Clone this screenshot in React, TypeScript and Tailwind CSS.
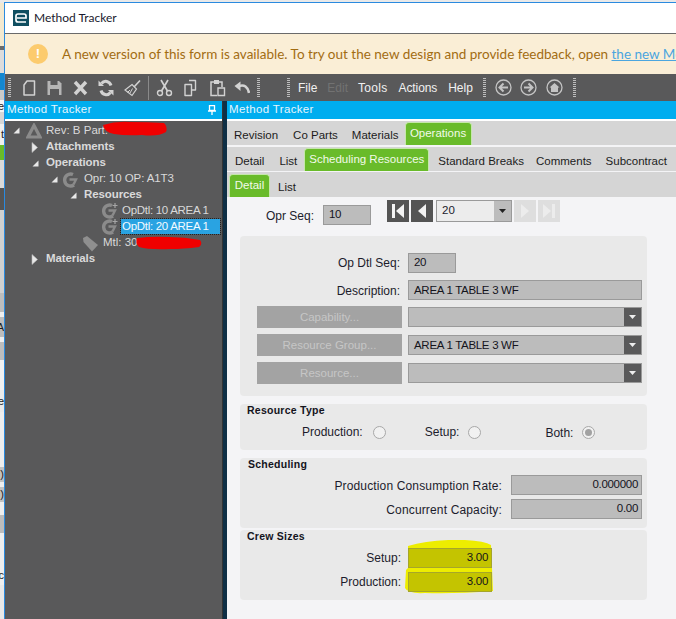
import React from "react";

const C = "#d2d2d2";

function Grip({ className = "" }: { className?: string }) {
  return <div className={"w-[3px] h-[20px] bg-[repeating-linear-gradient(to_bottom,#bdbdbd_0px,#bdbdbd_1px,#59595a_1px,#59595a_2px)] " + className} />;
}

function Icon({ w, children, className = "" }: { w: number; children: React.ReactNode; className?: string }) {
  return (
    <svg width={w} height={18} viewBox={`0 0 ${w} 18`} fill="none" stroke={C} strokeWidth={2} className={className}>
      {children}
    </svg>
  );
}

function Arrow({ open }: { open: boolean }) {
  return open ? (
    <svg width="7" height="7" viewBox="0 0 7 7" className="shrink-0"><path d="M6.5 .5V6.5H.5Z" fill="#e8e8e8" /></svg>
  ) : (
    <svg width="7" height="11" viewBox="0 0 7 11" className="shrink-0"><path d="M1 .5 6.5 5.5 1 10.5Z" fill="#e8e8e8" stroke="#bbb" strokeWidth=".6" /></svg>
  );
}

function GIcon({ plus }: { plus?: boolean }) {
  return (
    <svg width="18" height="17" viewBox="0 0 18 17" fill="none" className="shrink-0">
      <path d="M11 3.5A6 6 0 1 0 12 14" stroke="#8b8b8b" strokeWidth="3.4" />
      <path d="M7.5 8.5h6.5l-2.5 5" stroke="#8b8b8b" strokeWidth="2.4" />
      {plus ? <path d="M14 1v5M11.5 3.5h5" stroke="#a5a5a5" strokeWidth="1.2" /> : null}
    </svg>
  );
}

function Tab({ children, active, className = "" }: { children: React.ReactNode; active?: boolean; className?: string }) {
  if (active) {
    return (
      <div className={"self-end flex items-start justify-center bg-[#69bb2a] border border-b-0 border-[#c5e7ab] rounded-t-[4px] text-[#f2fae9] pt-[2px] " + className}>
        {children}
      </div>
    );
  }
  return <div className={"text-[#1c1c1c] pt-[6px] " + className}>{children}</div>;
}

function Field({ children, className = "" }: { children?: React.ReactNode; className?: string }) {
  return (
    <div className={"h-[20px] bg-[#bcbcbc] border border-[#9a9a9a] flex items-center text-[#14141c] text-[11.5px] tracking-[-0.3px] shrink-0 " + className}>
      {children}
    </div>
  );
}

function Combo({ text }: { text?: string }) {
  return (
    <div className="w-[234px] h-[20px] bg-[#bcbcbc] border border-[#9a9a9a] flex items-center text-[#14141c] text-[11.5px] tracking-[-0.3px] pl-[5px]">
      <span className="flex-1 pt-[1px]">{text}</span>
      <div className="w-[17px] h-[18px] bg-[#59595a] flex items-center justify-center">
        <svg width="7" height="4" viewBox="0 0 7 4"><path d="M0 0H7L3.5 4Z" fill="#eee" /></svg>
      </div>
    </div>
  );
}

function GrayBtn({ children }: { children: React.ReactNode }) {
  return (
    <div className="w-[145px] h-[22px] bg-[#a3a3a3] text-[#c6c6c6] flex items-center justify-center mr-[6px] pt-[1px] text-[11.5px]">
      {children}
    </div>
  );
}

function Radio({ on }: { on?: boolean }) {
  return (
    <div className="w-[13px] h-[13px] rounded-full border border-[#a8a8a8] bg-[#f1f1f1] flex items-center justify-center shrink-0">
      {on ? <div className="w-[7px] h-[7px] rounded-full bg-[#a2a2a2]" /> : null}
    </div>
  );
}

function NavBtn({ kind, off }: { kind: "first" | "prev" | "next" | "last"; off?: boolean }) {
  const fill = off ? "#ececec" : "#f2f2f2";
  return (
    <div className={"w-[22px] h-[22px] flex items-center justify-center shrink-0 " + (off ? "bg-[#dedede]" : "bg-[#545454]")}>
      <svg width="14" height="16" viewBox="0 0 14 16">
        {kind === "first" && <><rect x="1" y="1" width="3" height="14" fill={fill} /><path d="M13 1V15L5 8Z" fill={fill} /></>}
        {kind === "prev" && <path d="M11 1V15L3 8Z" fill={fill} />}
        {kind === "next" && <path d="M3 1V15L11 8Z" fill={fill} />}
        {kind === "last" && <><rect x="10" y="1" width="3" height="14" fill={fill} /><path d="M1 1V15L9 8Z" fill={fill} /></>}
      </svg>
    </div>
  );
}

function Circle({ children, className = "" }: { children: React.ReactNode; className?: string }) {
  return (
    <svg width="17" height="17" viewBox="0 0 17 17" fill="none" className={className}>
      <circle cx="8.5" cy="8.5" r="7.5" stroke="#c4c4c4" strokeWidth="1.3" />
      {children}
    </svg>
  );
}

const stripe = [
  ["h-[3px]", "bg-[#e9e9e9]", ""],
  ["h-[43px]", "bg-[#f3e9d0]", ""],
  ["h-[4px]", "bg-[#6b6b6b]", ""],
  ["h-[23px]", "bg-[#dcdcdc]", ""],
  ["h-[17px]", "bg-[#1388d0]", ""],
  ["h-[10px]", "bg-[#c9c9c9]", ""],
  ["h-[12px]", "bg-[#f4f4f4]", "e"],
  ["h-[12px]", "bg-[#d6d6d6]", ""],
  ["h-[21px]", "bg-[#efefef]", "t"],
  ["h-[15px]", "bg-[#69bb2a]", ""],
  ["h-[28px]", "bg-[#dadada]", ""],
  ["h-[22px]", "bg-[#555555]", ""],
  ["h-[83px]", "bg-[#d0d0d0]", ""],
  ["h-[19px]", "bg-[#bdbdbd]", ""],
  ["h-[5px]", "bg-[#eeeeee]", ""],
  ["h-[20px]", "bg-[#bdbdbd]", "A"],
  ["h-[5px]", "bg-[#eeeeee]", ""],
  ["h-[18px]", "bg-[#bdbdbd]", ""],
  ["h-[30px]", "bg-[#f2f2f2]", ""],
  ["h-[22px]", "bg-[#eaeaea]", "e"],
  ["h-[55px]", "bg-[#eeeeee]", ""],
  ["h-[15px]", "bg-[#c2c2c2]", ")"],
  ["h-[5px]", "bg-[#eeeeee]", ""],
  ["h-[15px]", "bg-[#c2c2c2]", ")"],
  ["h-[13px]", "bg-[#eeeeee]", ""],
  ["h-[18px]", "bg-[#bcbcbc]", ""],
  ["h-[32px]", "bg-[#eeeeee]", ""],
  ["h-[20px]", "bg-[#eeeeee]", "c"],
  ["h-[34px]", "bg-[#e8e8e8]", ""],
];

export default function App() {
  return (
    <div className="relative w-[676px] h-[619px] overflow-hidden flex bg-[#e9e9e9] font-['Liberation_Sans',Arial,sans-serif] text-[12px]">
      <div className="w-[4px] shrink-0 flex flex-col overflow-hidden">
        {stripe.map(([h, bg, t], i) => (
          <div key={i} className={"shrink-0 flex items-center justify-end text-[11px] text-[#222] leading-none overflow-hidden " + h + " " + bg}>
            {t}
          </div>
        ))}
      </div>

      <div className="flex-1 min-w-0 flex flex-col mt-[2px] border-l border-t border-[#2a8adf]">
        <div className="h-[31px] shrink-0 bg-white border-b border-[#6a6a6a] flex items-center pl-[8px]">
          <div className="w-[16px] h-[16px] bg-[#0f4e60] flex items-center justify-center mr-[5px]">
            <svg width="12" height="10" viewBox="0 0 12 10" fill="none"><path d="M11 9H3Q1 9 1 7V3Q1 1 3 1H9Q11 1 11 3V5H2" stroke="#fff" strokeWidth="1.7" /></svg>
          </div>
          <span className="font-['Lato',sans-serif] text-[12px] text-[#1a1a2e]">Method Tracker</span>
        </div>

        <div className="h-[40px] shrink-0 bg-[#faeed6] flex items-center pl-[23px] whitespace-nowrap overflow-hidden">
          <div className="w-[20px] h-[20px] rounded-full bg-[#fccb6e] flex items-center justify-center text-white font-bold text-[13px] mr-[14px] shrink-0">!</div>
          <span className="font-['Lato',sans-serif] text-[13.5px] text-[#a26c12]">
            A new version of this form is available. To try out the new design and provide feedback, open{" "}
            <span className="underline text-[#4aa5df]">the new Method Tracker</span>
          </span>
        </div>

        <div className="h-[27px] shrink-0 bg-[#59595a] flex items-center text-[#f1f1f1] text-[12px] whitespace-nowrap">
          <Grip className="ml-[3px]" />
          <Icon w={14} className="ml-[11px]"><path d="M5 2H12.5V16H2V6Z" strokeWidth="1.5" strokeLinejoin="round" /></Icon>
          <Icon w={17} className="ml-[10px]"><path d="M1.5 2H13L15.5 4.5V16H1.5Z" fill="#b5b5b5" stroke="none" /><rect x="4.5" y="2" width="7" height="4" fill="#59595a" stroke="none" /><rect x="4" y="10" width="9" height="6" fill="#59595a" stroke="none" /></Icon>
          <Icon w={15} className="ml-[10px]"><path d="M2 3 13 15M13 3 2 15" strokeWidth="3.4" /></Icon>
          <Icon w={16} className="ml-[10px]"><path d="M13 6.5A5.5 6 0 0 0 3.5 4.5M3 11.5A5.5 6 0 0 0 12.5 13.5" strokeWidth="3" /><path d="M6 7H0.5V1.5ZM10 11h5.5v5.5Z" fill={C} stroke="none" /></Icon>
          <Icon w={17} className="ml-[10px]"><path d="M16 1.5 10 8" strokeWidth="1.6" /><path d="M8 5.5 12.5 10 8 16.5 1 11 Z" strokeWidth="1.2" /><path d="M6 11 3.5 13.5M8.5 9.5 6 14" strokeWidth="1" /></Icon>
          <div className="w-px h-[24px] bg-[#8a8a8a] ml-[7px]" />
          <Icon w={17} className="ml-[7px]"><circle cx="4" cy="14" r="2.5" strokeWidth="1.4" /><circle cx="13" cy="14" r="2.5" strokeWidth="1.4" /><path d="M5.5 12 12 1M11.5 12 5 1" strokeWidth="1.7" /></Icon>
          <Icon w={15} className="ml-[10px]"><path d="M6 1.5H12.5V11H9M2 5.5H8.5V16.5H2Z" strokeWidth="1.4" strokeLinejoin="round" /></Icon>
          <Icon w={17} className="ml-[11px]"><path d="M5 3H2V16.5H8M10 3H13V8" strokeWidth="1.5" /><rect x="5" y="1" width="5" height="4" fill={C} stroke="none" /><path d="M9 9H15.5V16.5H9Z" strokeWidth="1.4" /></Icon>
          <Icon w={16} className="ml-[8px]"><path d="M5 7Q13 4.5 15 14" strokeWidth="2.6" /><path d="M6.5 2.5V12L0.5 7Z" fill={C} stroke="none" /></Icon>
          <Grip className="ml-[7px]" />
          <Grip className="ml-[27px]" />
          <span className="ml-[8px]">File</span>
          <span className="ml-[10px] text-[#727272]">Edit</span>
          <span className="ml-[10px] tracking-[0.3px]">Tools</span>
          <span className="ml-[11px] tracking-[-0.1px]">Actions</span>
          <span className="ml-[11px]">Help</span>
          <Grip className="ml-[10px]" />
          <Circle className="ml-[9px]"><path d="M13 8.5H5M8.5 4.5 4.5 8.5 8.5 12.5" stroke="#c4c4c4" strokeWidth="2" /></Circle>
          <Circle className="ml-[8px]"><path d="M4 8.5H12M8.5 4.5 12.5 8.5 8.5 12.5" stroke="#c4c4c4" strokeWidth="2" /></Circle>
          <Circle className="ml-[9px]"><path d="M3.5 8.5 8.5 4 13.5 8.5H12V13H5V8.5Z" fill="#c4c4c4" /></Circle>
          <Grip className="ml-[10px]" />
        </div>

        <div className="flex-1 min-h-0 flex">
          <div className="w-[217px] shrink-0 bg-[#59595a] flex flex-col text-[#dadada] text-[11.5px] whitespace-nowrap">
            <div className="h-[18px] bg-[#00adef] text-[#e6f6fd] flex items-center justify-between pl-[2px] pr-[6px] tracking-[0.35px]">
              <span>Method Tracker</span>
              <svg width="8" height="10" viewBox="0 0 8 10"><path d="M1.5 0.5H6.5V5.5H1.5ZM0 6H8M4 6V10" stroke="#fff" strokeWidth="1.3" fill="none" /></svg>
            </div>
            <div className="h-[2px] bg-white" />
            <div className="flex items-center h-[17px] pl-[8px] mt-[1px]">
              <Arrow open />
              <svg width="16" height="16" viewBox="0 0 16 16" className="ml-[6px] mr-[4px]" fill="none"><path d="M8 2.5 14 14H2Z" stroke="#8b8b8b" strokeWidth="3.2" /></svg>
              <span>Rev: B Part.</span>
            </div>
            <div className="flex items-center h-[16px] pl-[26px]"><Arrow open={false} /><span className="ml-[8px] font-bold tracking-[-0.1px]">Attachments</span></div>
            <div className="flex items-center h-[16px] pl-[27px]"><Arrow open /><span className="ml-[7px] font-bold tracking-[-0.1px]">Operations</span></div>
            <div className="flex items-center h-[16px] pl-[46px]"><Arrow open /><span className="ml-[4px]"><GIcon /></span><span className="ml-[4px] tracking-[-0.1px]">Opr: 10 OP: A1T3</span></div>
            <div className="flex items-center h-[16px] pl-[65px]"><Arrow open /><span className="ml-[7px] font-bold tracking-[-0.1px]">Resources</span></div>
            <div className="flex items-center h-[15px] pl-[96px]"><GIcon plus /><span className="ml-[3px] tracking-[-0.3px]">OpDtl: 10 AREA 1</span></div>
            <div className="flex items-center h-[17px] pl-[96px]"><GIcon plus /><span className="ml-[2px] pl-[1px] w-[99px] bg-[#29a3e2] text-[#f2faff] h-[15px] leading-[15px] tracking-[-0.3px] outline-1 outline-dotted outline-[#222]">OpDtl: 20 AREA 1</span></div>
            <div className="flex items-center h-[16px] pl-[77px]">
              <svg width="17" height="17" viewBox="0 0 17 17" className="mr-[4px]"><path d="M1 3 5 1 16 10 10 16.5 1.5 7Z" fill="#8f8f8f" /></svg>
              <span>Mtl: 30</span>
            </div>
            <div className="flex items-center h-[16px] pl-[26px]"><Arrow open={false} /><span className="ml-[8px] font-bold tracking-[-0.1px]">Materials</span></div>
          </div>

          <div className="w-[5px] shrink-0 bg-[#0f2f45] border-l border-[#333]" />

          <div className="flex-1 min-w-0 bg-[#f4f4f6] flex flex-col whitespace-nowrap text-[11.5px]">
            <div className="h-[18px] bg-[#00adef] text-[#e6f6fd] flex items-center pl-[2px] tracking-[0.35px]">Method Tracker</div>
            <div className="h-[2px] bg-white" />
            <div className="h-[24px] bg-[#d5d5d5] flex items-center">
              <Tab className="ml-[7px]">Revision</Tab>
              <Tab className="ml-[15px]">Co Parts</Tab>
              <Tab className="ml-[14px]">Materials</Tab>
              <Tab active className="ml-[6px] w-[67px] h-[23px]">Operations</Tab>
            </div>
            <div className="h-[2px] bg-[#f4f4f6]" />
            <div className="h-[24px] bg-[#d5d5d5] flex items-center">
              <Tab className="ml-[8px]">Detail</Tab>
              <Tab className="ml-[15px]">List</Tab>
              <Tab active className="ml-[7px] w-[125px] h-[23px]">Scheduling Resources</Tab>
              <Tab className="ml-[9px]">Standard Breaks</Tab>
              <Tab className="ml-[12px]">Comments</Tab>
              <Tab className="ml-[14px]">Subcontract</Tab>
            </div>
            <div className="h-[1px] bg-[#f4f4f6]" />
            <div className="h-[25px] bg-[#d5d5d5] flex items-center">
              <Tab active className="ml-[2px] w-[41px] h-[23px]">Detail</Tab>
              <Tab className="ml-[8px]">List</Tab>
            </div>

            <div className="flex items-start h-[39px] pt-[3px] text-[#1c1c2c]">
              <div className="w-[87px] text-right pt-[7px] text-[12px]">Opr Seq:</div>
              <Field className="w-[48px] pl-[5px] ml-[9px] mt-[5px]">10</Field>
              <div className="ml-[16px] flex gap-[2px]"><NavBtn kind="first" /><NavBtn kind="prev" /></div>
              <div className="ml-[3px] w-[76px] h-[22px] bg-[#ececec] border border-[#9a9a9a] flex items-center pl-[5px]">
                <span className="flex-1">20</span>
                <div className="w-[17px] h-[20px] bg-[#bcbcbc] flex items-center justify-center"><svg width="7" height="4" viewBox="0 0 7 4"><path d="M0 0H7L3.5 4Z" fill="#222" /></svg></div>
              </div>
              <div className="ml-[2px] flex gap-[2px]"><NavBtn kind="next" off /><NavBtn kind="last" off /></div>
            </div>

            <div className="ml-[13px] w-[407px] flex flex-col text-[#1c1c2c] text-[12px]">
              <div className="h-[160px] bg-[#e9e9e9] rounded-[4px] pt-[17px] pl-[17px] flex flex-col">
                <div className="flex items-center"><div className="w-[143px] text-right mr-[8px]">Op Dtl Seq:</div><Field className="w-[48px] pl-[5px]">20</Field></div>
                <div className="flex items-center mt-[7px]"><div className="w-[143px] text-right mr-[8px] pt-[2px]">Description:</div><Field className="w-[234px] pl-[5px] pt-[1px]">AREA 1 TABLE 3 WF</Field></div>
                <div className="flex items-center mt-[6px]"><GrayBtn>Capability...</GrayBtn><Combo /></div>
                <div className="flex items-center mt-[6px]"><GrayBtn>Resource Group...</GrayBtn><Combo text="AREA 1 TABLE 3 WF" /></div>
                <div className="flex items-center mt-[6px]"><GrayBtn>Resource...</GrayBtn><Combo /></div>
              </div>

              <div className="mt-[8px] h-[46px] bg-[#e9e9e9] rounded-[4px] pl-[7px]">
                <div className="font-bold text-[10.5px] tracking-[0.25px] text-[#14141c] leading-[12px]">Resource Type</div>
                <div className="flex items-center mt-[9px] h-[14px]">
                  <span className="ml-[55px]">Production:</span><span className="ml-[10px]"><Radio /></span>
                  <span className="ml-[39px] -mt-[1px]">Setup:</span><span className="ml-[9px]"><Radio /></span>
                  <span className="ml-[64px] mt-[1px]">Both:</span><span className="ml-[9px]"><Radio on /></span>
                </div>
              </div>

              <div className="mt-[8px] h-[70px] bg-[#e9e9e9] rounded-[4px] pl-[8px]">
                <div className="font-bold text-[10.5px] tracking-[0.25px] text-[#14141c] leading-[12px]">Scheduling</div>
                <div className="flex items-center mt-[5px]"><div className="w-[254px] text-right tracking-[0.15px] pt-[2px]">Production Consumption Rate:</div><Field className="w-[131px] ml-[9px] justify-end pr-[3px]">0.000000</Field></div>
                <div className="flex items-center mt-[4px]"><div className="w-[254px] text-right tracking-[0.15px] pt-[2px]">Concurrent Capacity:</div><Field className="w-[131px] ml-[9px] justify-end pr-[3px]">0.00</Field></div>
              </div>

              <div className="relative mt-[2px] h-[70px] bg-[#e9e9e9] rounded-[4px] pl-[7px]">
                <div className="font-bold text-[10.5px] tracking-[0.25px] text-[#14141c] leading-[12px]">Crew Sizes</div>
                <svg width="90" height="54" viewBox="0 0 90 54" className="absolute left-[165px] top-[10px]">
                  <path d="M3 6Q25 -1 60 0Q80 1 86 5L88 51Q50 54 20 53Q3 54 0 48L1 30L3 28Z" fill="#eded00" />
                </svg>
                <div className="relative flex items-center mt-[6px]"><div className="w-[154px] text-right">Setup:</div><Field className="w-[84px] ml-[7px] justify-end pr-[3px] !bg-[#c4c400] !border-[#a6a62a]">3.00</Field></div>
                <div className="relative flex items-center mt-[4px]"><div className="w-[154px] text-right">Production:</div><Field className="w-[84px] ml-[7px] justify-end pr-[3px] !bg-[#c4c400] !border-[#a6a62a]">3.00</Field></div>
              </div>
            </div>
          </div>
        </div>
      </div>

      <svg width="66" height="16" viewBox="0 0 66 16" className="absolute left-[102px] top-[121px]">
        <path d="M1 4Q14 0 28 1Q46 1 62 2Q66 6 64 11Q56 16 40 14Q24 15 12 13Q2 11 1 4Z" fill="#f00000" />
      </svg>
      <svg width="68" height="14" viewBox="0 0 68 14" className="absolute left-[135px] top-[236px]">
        <path d="M2 2Q18 0 34 1Q50 1 65 4Q68 8 64 11Q48 13 36 13Q14 14 4 11Q0 7 2 2Z" fill="#f00000" />
      </svg>
    </div>
  );
}
